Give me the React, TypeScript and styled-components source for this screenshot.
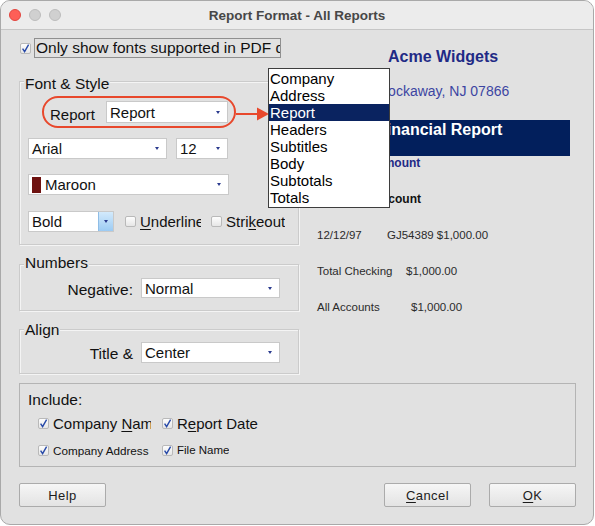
import React from "react";
import styled, { createGlobalStyle } from "styled-components";

const Global = createGlobalStyle`
  html, body { margin: 0; padding: 0; background: #ffffff; }
  body { font-family: "Liberation Sans", Arial, sans-serif; -webkit-font-smoothing: antialiased; }
  #root { width: 595px; height: 526px; }
`;

const Window = styled.div`
  position: relative;
  width: 594px;
  height: 525px;
  box-sizing: border-box;
  border: 1px solid #a9a9a9;
  border-radius: 10px;
  overflow: hidden;
  background: #e1e1e1;
  display: flex;
  flex-direction: column;
  color: #111;
`;

const TitleBar = styled.div`
  height: 28px;
  flex: none;
  background: #ececec;
  border-bottom: 1px solid #c6c6c6;
  display: grid;
  grid-template-columns: 1fr auto 1fr;
  align-items: center;
  padding-left: 8px;
`;

const Lights = styled.div`
  display: flex;
  gap: 8px;
`;

const Light = styled.span<{ $c: string; $b: string }>`
  width: 12px;
  height: 12px;
  box-sizing: border-box;
  border-radius: 50%;
  background: ${(p) => p.$c};
  border: 1px solid ${(p) => p.$b};
`;

const Title = styled.div`
  font-weight: bold;
  font-size: 13.5px;
  color: #474747;
  padding-right: 8px;
`;

const Body = styled.div`
  flex: 1;
  display: flex;
  flex-direction: column;
  padding: 8px 17px 0 18px;
`;

const TopSection = styled.div`
  display: flex;
  align-items: flex-start;
`;

const LeftCol = styled.div`
  width: 280px;
  flex: none;
  display: flex;
  flex-direction: column;
`;

const CheckRow = styled.div`
  height: 20px;
  display: flex;
  align-items: center;
`;

const Box = styled.span<{ $ml?: number }>`
  width: 11px;
  height: 11px;
  flex: none;
  box-sizing: border-box;
  border: 1px solid #b9b9b9;
  border-radius: 2px;
  background: linear-gradient(#fdfdfd, #e6e6e6);
  display: inline-flex;
  align-items: center;
  justify-content: center;
  margin-left: ${(p) => p.$ml ?? 0}px;
`;

const FocusLabel = styled.div`
  margin-left: 3px;
  width: 247px;
  height: 20px;
  box-sizing: border-box;
  border: 1px solid #8f8f8f;
  overflow: hidden;
  white-space: nowrap;
  font-size: 15.5px;
  line-height: 18px;
  padding-left: 1px;
`;

const Group = styled.div<{ $mt: number; $pb: number }>`
  margin-top: ${(p) => p.$mt}px;
  border: 1px solid #cbcbcb;
  box-shadow: inset 1px 1px 0 #f4f4f4, 1px 1px 0 #f4f4f4;
  display: flex;
  flex-direction: column;
  padding-bottom: ${(p) => p.$pb}px;
`;

const Caption = styled.div<{ $lift: number }>`
  align-self: flex-start;
  margin: -${(p) => p.$lift}px 0 0 4px;
  padding: 0 1px;
  background: #e1e1e1;
  font-size: 15.5px;
  line-height: 16px;
  white-space: nowrap;
`;

const Ring = styled.div`
  margin: 4px 0 0 22px;
  width: 194px;
  height: 32px;
  box-sizing: border-box;
  border: 2px solid #e8482c;
  border-radius: 16px;
  display: flex;
  align-items: center;
  padding-left: 6px;
`;

const InlineLabel = styled.span`
  font-size: 15px;
  width: 56px;
  padding-top: 5px;
`;

const Row = styled.div<{ $mt: number; $ml?: number; $gap?: number }>`
  margin-top: ${(p) => p.$mt}px;
  margin-left: ${(p) => p.$ml ?? 8}px;
  display: flex;
  align-items: center;
  gap: ${(p) => p.$gap ?? 0}px;
`;

const SelectBox = styled.div<{ $w: number; $h?: number }>`
  width: ${(p) => p.$w}px;
  height: ${(p) => p.$h ?? 21}px;
  flex: none;
  box-sizing: border-box;
  background: #fff;
  border: 1px solid #c9c9c9;
  display: flex;
  align-items: center;
  font-size: 15px;
  color: #111;
  overflow: hidden;
`;

const SelectText = styled.span`
  flex: 1;
  padding-left: 3px;
  white-space: nowrap;
  display: flex;
  align-items: center;
  gap: 4px;
`;

const Caret = styled.span`
  margin-right: 7px;
  display: inline-flex;
`;

const BlueButton = styled.span`
  width: 14px;
  align-self: stretch;
  border-left: 1px solid #8fbde6;
  background: linear-gradient(#d3eafc, #9ccbf3);
  display: flex;
  align-items: center;
  justify-content: center;
`;

const Swatch = styled.span`
  width: 9px;
  height: 16px;
  background: #6e1210;
`;

const CheckLabel = styled.span<{ $w?: number; $size?: number }>`
  margin-left: 4px;
  font-size: ${(p) => p.$size ?? 15}px;
  white-space: nowrap;
  overflow: hidden;
  ${(p) => (p.$w ? `width: ${p.$w}px;` : "")}
  flex: none;
`;

const FieldLabel = styled.span`
  width: 113px;
  text-align: right;
  font-size: 15.5px;
  padding-top: 4px;
  margin-right: 8px;
  white-space: nowrap;
`;

const U = styled.span`
  text-decoration: underline;
  text-underline-offset: 2px;
`;

const Preview = styled.div`
  flex: 1;
  display: flex;
  flex-direction: column;
  padding-top: 10px;
  font-family: "Liberation Sans", Arial, sans-serif;
`;

const PTitle = styled.div`
  margin-left: 89px;
  font-weight: bold;
  font-size: 16px;
  line-height: 18px;
  color: #1f2a86;
  white-space: nowrap;
`;

const PAddress = styled.div`
  margin: 17px 0 0 79px;
  font-size: 14px;
  line-height: 16px;
  color: #3c45a2;
  white-space: nowrap;
`;

const Band = styled.div`
  margin: 21px 0 0 73px;
  width: 198px;
  height: 36px;
  box-sizing: border-box;
  background: #021f5c;
  color: #fff;
  font-weight: bold;
  font-size: 16px;
  line-height: 18px;
  padding: 1px 0 0 5px;
  white-space: nowrap;
`;

const PHeader = styled.div<{ $mt: number; $ml: number; $c: string }>`
  margin: ${(p) => p.$mt}px 0 0 ${(p) => p.$ml}px;
  font-weight: bold;
  font-size: 12px;
  line-height: 14px;
  color: ${(p) => p.$c};
  white-space: nowrap;
`;

const DataRow = styled.div`
  margin: 22px 0 0 18px;
  display: flex;
  font-size: 11.5px;
  line-height: 14px;
  color: #2b2b2b;
  white-space: nowrap;
`;

const Cell = styled.span<{ $w?: number }>`
  ${(p) => (p.$w ? `width: ${p.$w}px;` : "")}
  flex: none;
`;

const IncludeBox = styled.div`
  margin-top: 9px;
  border: 1px solid #b4b4b4;
  padding: 7px 8px 7px 8px;
  display: flex;
  flex-direction: column;
`;

const IncludeTitle = styled.div`
  font-size: 15.5px;
  line-height: 18px;
`;

const IncRow = styled.div<{ $mt: number; $h: number }>`
  margin: ${(p) => p.$mt}px 0 0 10px;
  height: ${(p) => p.$h}px;
  display: flex;
  align-items: center;
`;

const IncCell = styled.div<{ $w?: number }>`
  display: flex;
  align-items: center;
  ${(p) => (p.$w ? `width: ${p.$w}px;` : "")}
  flex: none;
`;

const ButtonRow = styled.div`
  margin-top: 16px;
  display: flex;
  justify-content: space-between;
`;

const ButtonGroup = styled.div`
  display: flex;
  gap: 18px;
`;

const Button = styled.button`
  width: 87px;
  height: 24px;
  box-sizing: border-box;
  border: 1px solid #ababab;
  border-radius: 2px;
  background: linear-gradient(#f6f6f6, #e3e3e3);
  font-family: "Liberation Sans", Arial, sans-serif;
  font-size: 13px;
  letter-spacing: 0.4px;
  color: #1c1c1c;
  padding: 0;
`;

const ListMenu = styled.div`
  position: absolute;
  left: 267px;
  top: 67px;
  width: 122px;
  height: 140px;
  box-sizing: border-box;
  border: 1px solid #3d3d3d;
  background: #fff;
  padding: 1px 0;
  z-index: 3;
`;

const ListItem = styled.div<{ $sel?: boolean }>`
  height: 17px;
  line-height: 17px;
  font-size: 15px;
  padding-left: 1px;
  color: ${(p) => (p.$sel ? "#fff" : "#000")};
  background: ${(p) => (p.$sel ? "#0a2360" : "transparent")};
`;

const Pointer = styled.svg`
  position: absolute;
  left: 235px;
  top: 105px;
  z-index: 2;
`;

const Check = ({ on = true }: { on?: boolean }) => (
  <>
    {on ? (
      <svg width="9" height="9" viewBox="0 0 9 9">
        <path d="M1.6 4.6 L3.6 7.6 L7.6 0.6" fill="none" stroke="#2749a8" strokeWidth="1.4" />
      </svg>
    ) : null}
  </>
);

const CaretIcon = () => (
  <svg width="4" height="3" viewBox="0 0 4 3">
    <path d="M0 0 L4 0 L2 3 Z" fill="#2b3b8e" />
  </svg>
);

const Select = ({ w, h, children }: { w: number; h?: number; children: React.ReactNode }) => (
  <SelectBox $w={w} $h={h}>
    <SelectText>{children}</SelectText>
    <Caret>
      <CaretIcon />
    </Caret>
  </SelectBox>
);

const items = ["Company", "Address", "Report", "Headers", "Subtitles", "Body", "Subtotals", "Totals"];

export default function App() {
  return (
    <>
      <Global />
      <Window>
        <TitleBar>
          <Lights>
            <Light $c="#fe5f57" $b="#e2463f" />
            <Light $c="#d0d0d0" $b="#bcbcbc" />
            <Light $c="#d0d0d0" $b="#bcbcbc" />
          </Lights>
          <Title>Report Format - All Reports</Title>
          <span />
        </TitleBar>
        <Body>
          <TopSection>
            <LeftCol>
              <CheckRow>
                <Box $ml={1}>
                  <Check />
                </Box>
                <FocusLabel>Only show fonts supported in PDF documents</FocusLabel>
              </CheckRow>

              <Group $mt={23} $pb={12}>
                <Caption $lift={6}>Font &amp; Style</Caption>
                <Ring>
                  <InlineLabel>Report</InlineLabel>
                  <Select w={122} h={22}>Report</Select>
                </Ring>
                <Row $mt={10} $gap={9}>
                  <Select w={139}>Arial</Select>
                  <Select w={52}>12</Select>
                </Row>
                <Row $mt={15}>
                  <Select w={201}>
                    <Swatch />
                    Maroon
                  </Select>
                </Row>
                <Row $mt={16}>
                  <SelectBox $w={86}>
                    <SelectText>Bold</SelectText>
                    <BlueButton>
                      <CaretIcon />
                    </BlueButton>
                  </SelectBox>
                  <Box $ml={11}>
                    <Check on={false} />
                  </Box>
                  <CheckLabel $w={61}>
                    <U>U</U>nderline
                  </CheckLabel>
                  <Box $ml={10}>
                    <Check on={false} />
                  </Box>
                  <CheckLabel>
                    Stri<U>k</U>eout
                  </CheckLabel>
                </Row>
              </Group>

              <Group $mt={19} $pb={11}>
                <Caption $lift={10}>Numbers</Caption>
                <Row $mt={6} $ml={0}>
                  <FieldLabel>Negative:</FieldLabel>
                  <Select w={139} h={20}>Normal</Select>
                </Row>
              </Group>

              <Group $mt={18} $pb={10}>
                <Caption $lift={8}>Align</Caption>
                <Row $mt={3} $ml={0}>
                  <FieldLabel>Title &amp;</FieldLabel>
                  <Select w={139}>Center</Select>
                </Row>
              </Group>
            </LeftCol>

            <Preview>
              <PTitle>Acme Widgets</PTitle>
              <PAddress>Rockaway, NJ 07866</PAddress>
              <Band>Financial Report</Band>
              <PHeader $mt={0} $ml={76} $c="#1f2a86">Amount</PHeader>
              <PHeader $mt={22} $ml={74} $c="#111">Account</PHeader>
              <DataRow>
                <Cell $w={70}>12/12/97</Cell>
                <Cell>GJ54389 $1,000.00</Cell>
              </DataRow>
              <DataRow>
                <Cell $w={89}>Total Checking</Cell>
                <Cell>$1,000.00</Cell>
              </DataRow>
              <DataRow>
                <Cell $w={94}>All Accounts</Cell>
                <Cell>$1,000.00</Cell>
              </DataRow>
            </Preview>
          </TopSection>

          <IncludeBox>
            <IncludeTitle>Include:</IncludeTitle>
            <IncRow $mt={4} $h={20}>
              <IncCell $w={124}>
                <Box>
                  <Check />
                </Box>
                <CheckLabel $w={98}>
                  Company <U>N</U>ame
                </CheckLabel>
              </IncCell>
              <IncCell>
                <Box>
                  <Check />
                </Box>
                <CheckLabel>
                  R<U>e</U>port Date
                </CheckLabel>
              </IncCell>
            </IncRow>
            <IncRow $mt={8} $h={18}>
              <IncCell $w={124}>
                <Box>
                  <Check />
                </Box>
                <CheckLabel $size={11.7}>
                  Company <U>A</U>ddress
                </CheckLabel>
              </IncCell>
              <IncCell>
                <Box>
                  <Check />
                </Box>
                <CheckLabel $size={11.5}>File Name</CheckLabel>
              </IncCell>
            </IncRow>
          </IncludeBox>

          <ButtonRow>
            <Button>Help</Button>
            <ButtonGroup>
              <Button>
                <U>C</U>ancel
              </Button>
              <Button>
                <U>O</U>K
              </Button>
            </ButtonGroup>
          </ButtonRow>
        </Body>

        <Pointer width="34" height="16" viewBox="0 0 34 16">
          <line x1="0" y1="8" x2="22" y2="8" stroke="#e8482c" strokeWidth="2" />
          <path d="M21 1.5 L33 8 L21 14.5 Z" fill="#e8482c" />
        </Pointer>

        <ListMenu>
          {items.map((it) => (
            <ListItem key={it} $sel={it === "Report"}>
              {it}
            </ListItem>
          ))}
        </ListMenu>
      </Window>
    </>
  );
}
